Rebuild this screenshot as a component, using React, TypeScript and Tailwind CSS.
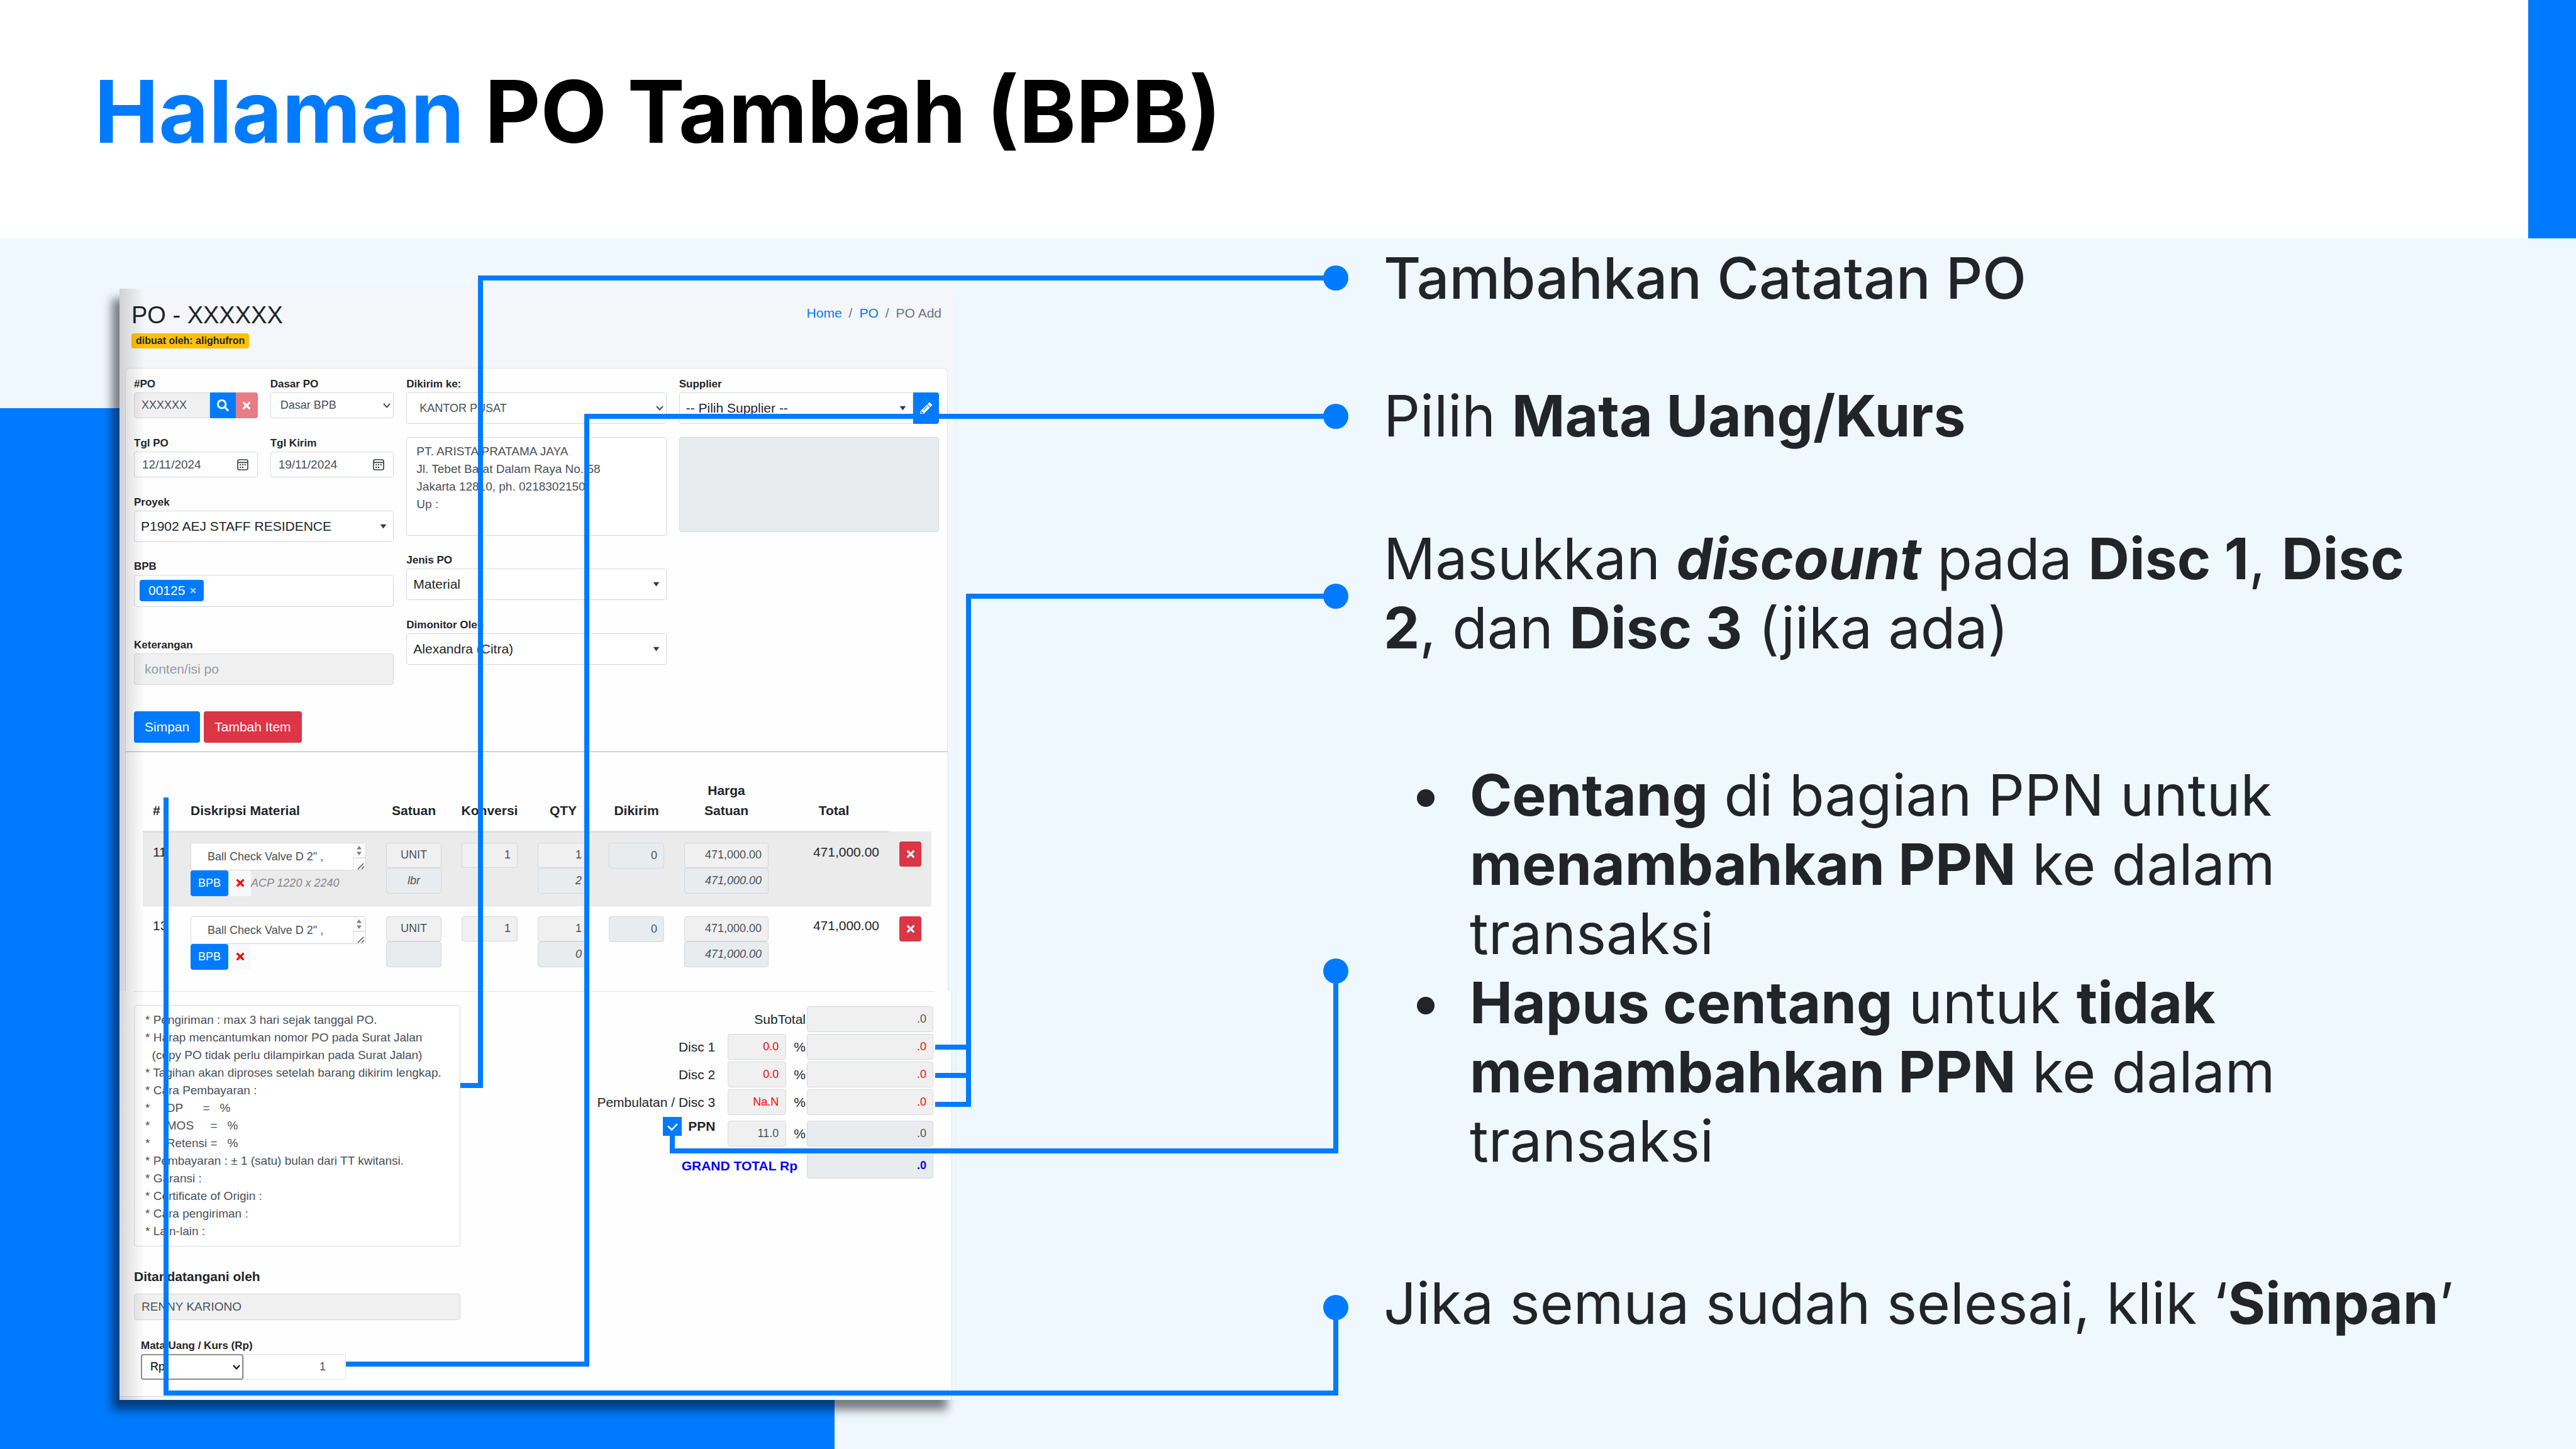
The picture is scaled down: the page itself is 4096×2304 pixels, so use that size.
import React from "react";
import { FaPencilAlt, FaSearch, FaTimes } from "react-icons/fa";

const CONTROL =
  "block w-full min-w-0 rounded-[4px] border border-[#d5dade] text-[#495057] outline-none";

function Caret() {
  return (
    <svg viewBox="0 0 10 7" className="pointer-events-none absolute right-[11px] top-1/2 h-[7px] w-[11px] -translate-y-1/2" aria-hidden="true">
      <path d="M0 0H10L5 7Z" fill="#343a40" />
    </svg>
  );
}

function Chevron({ dark = false }: { dark?: boolean }) {
  return (
    <svg viewBox="0 0 12 8" className="pointer-events-none absolute right-[5px] top-1/2 h-[8px] w-[12px] -translate-y-1/2" aria-hidden="true">
      <path d="M1 1L6 6.5L11 1" fill="none" stroke={dark ? "#000" : "#495057"} strokeWidth="2" />
    </svg>
  );
}

function CalendarIcon() {
  return (
    <svg viewBox="0 0 18 18" className="pointer-events-none absolute right-[15px] top-1/2 size-[18px] -translate-y-1/2" aria-hidden="true">
      <rect x="1" y="1" width="16" height="16" rx="2.5" fill="none" stroke="#343a40" strokeWidth="1.6" />
      <path d="M1 5.4H17" stroke="#343a40" strokeWidth="1.8" />
      <g fill="#343a40">
        <rect x="4.2" y="8" width="2" height="2" />
        <rect x="8" y="8" width="2" height="2" />
        <rect x="11.8" y="8" width="2" height="2" />
        <rect x="4.2" y="12" width="2" height="2" />
        <rect x="8" y="12" width="2" height="2" />
      </g>
    </svg>
  );
}

function Field({ id, label, children }: { id: string; label: string; children: React.ReactNode }) {
  return (
    <div>
      <label htmlFor={id} className="block text-[17px] font-bold leading-[27px]">
        {label}
      </label>
      {children}
    </div>
  );
}

function Dropdown({ id, value, plain = false }: { id: string; value: string; plain?: boolean }) {
  return (
    <div className="relative min-w-0 flex-1">
      <select
        id={id}
        className={
          plain
            ? "block h-[50px] w-full appearance-none rounded-[4px] border border-[#d5dade] bg-white pl-[20px] text-[18px] text-[#495057]"
            : "block h-[50px] w-full appearance-none rounded-[4px] border border-[#d5dade] bg-white pl-[10px] text-[21px] text-[#212529]"
        }
      >
        <option>{value}</option>
      </select>
      {plain ? <Chevron /> : <Caret />}
    </div>
  );
}

function DateField({ id, label, value }: { id: string; label: string; value: string }) {
  return (
    <Field id={id} label={label}>
      <div className="relative">
        <input id={id} defaultValue={value} className={`${CONTROL} h-[41px] bg-white pl-[12px] text-[19px]`} />
        <CalendarIcon />
      </div>
    </Field>
  );
}

function OrderForm() {
  return (
    <section className="bg-[#f4f6f9] pr-[11px] pl-[9px]">
      <header className="flex h-[126px] items-start justify-between pt-[19px] pr-[10px] pl-[10px]">
        <div>
          <h2 className="text-[38px] leading-[46px]">PO - XXXXXX</h2>
          <span className="mt-[6px] block w-fit rounded-[4px] bg-[#ffc107] px-[7px] text-[16px] font-bold leading-[24px]">
            dibuat oleh: alighufron
          </span>
        </div>
        <nav className="mt-[8px] flex gap-[11px] text-[21px] leading-[24px] text-[#6c757d]">
          <a href="#home" className="text-[#007bff]">Home</a>
          <span>/</span>
          <a href="#po" className="text-[#007bff]">PO</a>
          <span>/</span>
          <span>PO Add</span>
        </nav>
      </header>

      <div className="grid h-[610px] grid-cols-3 gap-[20px] rounded-t-[6px] border border-[#e1e4e8] bg-[#fefefe] px-[13px] pt-[11px]">
        <div className="flex flex-col">
          <div className="grid grid-cols-2 gap-x-[20px] gap-y-[26px]">
            <Field id="po" label="#PO">
              <div className="flex">
                <input id="po" defaultValue="XXXXXX" className="h-[41px] w-0 flex-1 rounded-l-[4px] border border-[#d5dade] bg-[#f0f0f0] pl-[11px] text-[18px] text-[#495057]" />
                <button aria-label="Cari PO" className="flex h-[41px] w-[41px] items-center justify-center bg-[#007bff] text-white">
                  <FaSearch className="size-[19px]" />
                </button>
                <button aria-label="Hapus PO" className="flex h-[41px] w-[35px] items-center justify-center rounded-r-[4px] bg-[#e77c87] text-white">
                  <FaTimes className="size-[18px]" />
                </button>
              </div>
            </Field>
            <Field id="dasar" label="Dasar PO">
              <div className="relative">
                <select id="dasar" className="block h-[41px] w-full appearance-none rounded-[4px] border border-[#d5dade] bg-white pl-[15px] text-[18px] text-[#495057]">
                  <option>Dasar BPB</option>
                </select>
                <Chevron />
              </div>
            </Field>
            <DateField id="tgl-po" label="Tgl PO" value="12/11/2024" />
            <DateField id="tgl-kirim" label="Tgl Kirim" value="19/11/2024" />
          </div>
          <div className="mt-[26px]">
            <Field id="proyek" label="Proyek">
              <Dropdown id="proyek" value="P1902 AEJ STAFF RESIDENCE" />
            </Field>
          </div>
          <div className="mt-[25px]">
            <Field id="bpb" label="BPB">
              <div className="flex h-[51px] items-start rounded-[4px] border border-[#d5dade] bg-white px-[8px] pt-[7px]">
                <button id="bpb" className="flex h-[34px] items-center gap-[7px] rounded-[4px] bg-[#007bff] pr-[11px] pl-[14px] text-[21px] text-white">
                  00125 <FaTimes className="size-[12px] text-[#b2d7ff]" />
                </button>
              </div>
            </Field>
          </div>
          <div className="mt-[47px]">
            <Field id="keterangan" label="Keterangan">
              <input id="keterangan" placeholder="konten/isi po" className={`${CONTROL} h-[50px] bg-[#f0f0f0] pl-[16px] text-[21px] placeholder:text-[#939ba2]`} />
            </Field>
          </div>
          <div className="mt-[42px] flex gap-[6px] text-[21px] text-white">
            <button className="h-[50px] rounded-[4px] bg-[#007bff] px-[17px]">Simpan</button>
            <button className="h-[50px] rounded-[4px] bg-[#dc3545] px-[17px]">Tambah Item</button>
          </div>
        </div>

        <div className="flex flex-col">
          <Field id="dikirim" label="Dikirim ke:">
            <Dropdown id="dikirim" value="KANTOR PUSAT" plain />
          </Field>
          <textarea
            aria-label="Alamat pengiriman"
            className={`${CONTROL} mt-[21px] h-[157px] resize-none overflow-hidden bg-white px-[15px] pt-[8px] text-[19px] leading-[28px]`}
            defaultValue={"PT. ARISTA PRATAMA JAYA\nJl. Tebet Barat Dalam Raya No. 58\nJakarta 12810, ph. 0218302150\nUp :"}
          />
          <div className="mt-[25px]">
            <Field id="jenis" label="Jenis PO">
              <Dropdown id="jenis" value="Material" />
            </Field>
          </div>
          <div className="mt-[26px]">
            <Field id="dimonitor" label="Dimonitor Oleh">
              <Dropdown id="dimonitor" value="Alexandra (Citra)" />
            </Field>
          </div>
        </div>

        <div className="flex flex-col">
          <Field id="supplier" label="Supplier">
            <div className="flex">
              <Dropdown id="supplier" value="-- Pilih Supplier --" />
              <button aria-label="Ubah supplier" className="flex h-[50px] w-[41px] items-center justify-center rounded-r-[4px] bg-[#007bff] text-white">
                <FaPencilAlt className="size-[19px]" />
              </button>
            </div>
          </Field>
          <textarea aria-label="Alamat supplier" readOnly className={`${CONTROL} mt-[21px] h-[151px] resize-none bg-[#e9ecef]`} />
        </div>
      </div>
    </section>
  );
}

const CELL = "px-[16px] pt-[16px] align-top";
const EDIT = "block h-[40px] w-full min-w-0 rounded-[4px] border border-[#d3d8dd] bg-[#f0f0f0] px-[10px] text-[18px] text-[#495057]";
const READ = "block h-[41px] w-full min-w-0 rounded-[4px] border border-[#d3d8dd] bg-[#e9ecef] px-[10px] text-[18px] text-[#495057]";

type Item = { no: string; note: string; unit2: string; qty2: string; striped: boolean };

const ITEMS: Item[] = [
  { no: "11", note: "ACP 1220 x 2240", unit2: "lbr", qty2: "2", striped: true },
  { no: "13", note: "", unit2: "", qty2: "0", striped: false },
];

function ItemRow({ item }: { item: Item }) {
  return (
    <tr className={item.striped ? "h-[118px] border-b border-[#dee2e6] bg-[#ebebeb]" : "h-[117px]"}>
      <td className={`${CELL} text-[21px] leading-[30px]`}>{item.no}</td>
      <td className={CELL}>
        <div className="relative">
          <textarea
            aria-label={`Diskripsi material ${item.no}`}
            className="block h-[44px] w-full resize-none overflow-hidden rounded-[4px] border border-[#d3d8dd] bg-white pt-[7px] pl-[21px] text-[18px] leading-[28px] text-[#495057]"
            defaultValue={' Ball Check Valve D 2" ,'}
          />
          <svg viewBox="0 0 20 42" className="pointer-events-none absolute top-px right-px h-[42px] w-[20px]" aria-hidden="true">
            <rect width="20" height="42" fill="#fafafa" />
            <path d="M6 9.5L10 4L14 9.5Z M6 13.500L10 19L14 13.500Z" fill="#808080" />
            <path d="M0 42V23H20" fill="none" stroke="#dcdcdc" strokeWidth="1.500" />
            <path d="M8 41L17 32M14 41L18 37" stroke="#555" strokeWidth="1.500" />
          </svg>
        </div>
        <div className="flex items-center">
          <button className="h-[41px] w-[60px] rounded-[4px] bg-[#007bff] text-[18px] text-white">BPB</button>
          <button aria-label="Lepas BPB" className="ml-px flex h-[41px] w-[35px] items-center justify-center rounded-[3px] bg-[#f8f9fa] text-[#ff0000]">
            <FaTimes className="size-[18px]" />
          </button>
          <i className="text-[18px] whitespace-nowrap text-[#868686]">{item.note}</i>
        </div>
      </td>
      <td className={CELL}>
        <input aria-label="Satuan" defaultValue="UNIT" className={`${EDIT} text-center`} />
        <input aria-label="Satuan konversi" readOnly value={item.unit2} className={`${READ} text-center italic`} />
      </td>
      <td className={CELL}>
        <input aria-label="Konversi" defaultValue="1" className={`${EDIT} text-right`} />
      </td>
      <td className={CELL}>
        <input aria-label="QTY" defaultValue="1" className={`${EDIT} text-right`} />
        <input aria-label="QTY konversi" readOnly value={item.qty2} className={`${READ} text-right italic`} />
      </td>
      <td className={CELL}>
        <input aria-label="Dikirim" readOnly value="0" className={`${READ} text-right`} />
      </td>
      <td className={CELL}>
        <input aria-label="Harga satuan" defaultValue="471,000.00" className={`${EDIT} text-right`} />
        <input aria-label="Harga konversi" readOnly value="471,000.00" className={`${READ} text-right italic`} />
      </td>
      <td className={`${CELL} text-right text-[21px] leading-[30px]`}>471,000.00</td>
      <td className={CELL}>
        <button aria-label="Hapus item" className="flex h-[40px] w-full items-center justify-center rounded-[4px] bg-[#dc3545] text-white">
          <FaTimes className="size-[18px]" />
        </button>
      </td>
    </tr>
  );
}

function ItemTable() {
  const head = "border-b-[3px] border-[#dee2e6] pb-[16px] align-bottom leading-[32px]";
  return (
    <section className="mr-[10px] h-[381px] border-r border-[#dcdfe3] bg-[#f4f6f9] pl-[9px]">
      <div className="h-full border-t border-t-[#b9c6de] border-l border-l-[#dcdfe3] bg-[#fefefe] pr-[26px] pl-[27px]">
        <table className="w-full table-fixed border-collapse">
          <colgroup>
            <col className="w-[60px]" />
            <col />
            <col className="w-[120px]" />
            <col className="w-[121px]" />
            <col className="w-[113px]" />
            <col className="w-[120px]" />
            <col className="w-[166px]" />
            <col className="w-[176px]" />
            <col className="w-[67px]" />
          </colgroup>
          <thead>
            <tr className="h-[126px] text-[21px]">
              <th className={`${head} px-[16px] text-left`}>#</th>
              <th className={`${head} px-[16px] text-left`}>Diskripsi Material</th>
              <th className={head}>Satuan</th>
              <th className={head}>Konversi</th>
              <th className={head}>QTY</th>
              <th className={head}>Dikirim</th>
              <th className={`${head} px-[30px]`}>Harga Satuan</th>
              <th className={head}>Total</th>
              <td />
            </tr>
          </thead>
          <tbody>
            {ITEMS.map((item) => (
              <ItemRow key={item.no} item={item} />
            ))}
          </tbody>
        </table>
      </div>
    </section>
  );
}

const NOTES = [
  "* Pengiriman : max 3 hari sejak tanggal PO.",
  "* Harap mencantumkan nomor PO pada Surat Jalan",
  "  (copy PO tidak perlu dilampirkan pada Surat Jalan)",
  "* Tagihan akan diproses setelah barang dikirim lengkap.",
  "* Cara Pembayaran :",
  "*     DP      =   %",
  "*     MOS     =   %",
  "*     Retensi =   %",
  "* Pembayaran : ± 1 (satu) bulan dari TT kwitansi.",
  "* Garansi :",
  "* Certificate of Origin :",
  "* Cara pengiriman :",
  "* Lain-lain :",
].join("\n");

const DISCOUNTS = [
  { id: "disc1", label: "Disc 1", pct: "0.0" },
  { id: "disc2", label: "Disc 2", pct: "0.0" },
  { id: "disc3", label: "Pembulatan / Disc 3", pct: "Na.N" },
];

const TOTAL = "h-[41px] w-[201px] rounded-[4px] border border-[#d5dade] px-[10px] text-right text-[18px]";
const PERCENT = "h-[41px] w-[93px] rounded-[4px] border border-[#d5dade] bg-[#f0f0f0] px-[11px] text-right text-[18px]";

function Totals() {
  return (
    <div className="flex flex-col gap-[3px] pt-[23px] pr-[2px] text-[21px]">
      <div className="flex items-center justify-end gap-[2px]">
        <label htmlFor="subtotal">SubTotal</label>
        <input id="subtotal" defaultValue=".0" className={`${TOTAL} bg-[#f0f0f0] text-[#495057]`} />
      </div>
      {DISCOUNTS.map((d) => (
        <div key={d.id} className="flex items-center justify-end">
          <label htmlFor={d.id} className="mr-[20px]">{d.label}</label>
          <input id={d.id} defaultValue={d.pct} className={`${PERCENT} text-[#ff0000]`} />
          <span className="mr-[2px] ml-[12px]">%</span>
          <input aria-label={`Nilai ${d.label}`} defaultValue=".0" className={`${TOTAL} bg-[#f0f0f0] text-[#ff0000]`} />
        </div>
      ))}
      <div className="flex items-end justify-end">
        <label className="mr-[20px] flex h-[47px] items-start gap-[10px] font-bold leading-[30px]">
          <span className="relative size-[30px]">
            <input type="checkbox" defaultChecked className="block size-[30px] appearance-none bg-[#007bff]" />
            <svg viewBox="0 0 30 30" className="pointer-events-none absolute inset-0" aria-hidden="true">
              <path d="M8 14.500L14 20.500L23 11" fill="none" stroke="#fff" strokeWidth="2.500" />
            </svg>
          </span>
          PPN
        </label>
        <input aria-label="PPN persen" defaultValue="11.0" className={`${PERCENT} text-[#495057]`} />
        <span className="mr-[2px] ml-[12px] leading-[41px]">%</span>
        <input aria-label="Nilai PPN" readOnly value=".0" className={`${TOTAL} bg-[#e9ecef] text-[#495057]`} />
      </div>
      <div className="mt-[7px] flex items-center justify-end font-bold text-[#0000ff]">
        <label htmlFor="grand" className="mr-[15px]">GRAND TOTAL Rp</label>
        <input id="grand" readOnly value=".0" className={`${TOTAL} bg-[#e9ecef]`} />
      </div>
    </div>
  );
}

function Summary() {
  return (
    <section className="mr-[4px] flex h-[650px] flex-col border-r border-[#dcdfe3] bg-[#fefefe]">
      <div className="mr-[27px] ml-[23px] flex flex-1 justify-between border-t border-[#e0e3e6]">
        <div className="w-[519px] pt-[21px]">
          <textarea
            aria-label="Catatan PO"
            defaultValue={NOTES}
            className={`${CONTROL} h-[384px] resize-none overflow-hidden bg-white pt-[9px] pl-[17px] text-[19px] leading-[28px] whitespace-pre`}
          />
          <label htmlFor="signer" className="mt-[32px] block text-[21px] font-bold leading-[32px]">Ditandatangani oleh</label>
          <input id="signer" defaultValue="RENNY KARIONO" className={`${CONTROL} mt-[11px] h-[42px] bg-[#f0f0f0] pl-[11px] text-[19px]`} />
          <div className="mt-[27px] ml-[11px]">
            <Field id="currency" label="Mata Uang / Kurs (Rp)">
              <div className="flex">
                <div className="relative w-[163px]">
                  <select id="currency" className="block h-[41px] w-full appearance-none rounded-[4px] border-2 border-[#8f8f8f] bg-white pl-[13px] text-[18px] text-black">
                    <option>Rp</option>
                  </select>
                  <Chevron dark />
                </div>
                <input aria-label="Kurs" defaultValue="1" className="h-[41px] w-[163px] rounded-[4px] border border-[#dde1e5] bg-white pr-[31px] text-right text-[18px] text-[#495057]" />
              </div>
            </Field>
          </div>
        </div>
        <Totals />
      </div>
      <div className="h-[6px] border-t border-[#d5d8dc] bg-[#f4f6f9]" />
    </section>
  );
}

function Connectors() {
  return (
    <svg viewBox="0 0 4096 2304" preserveAspectRatio="none" className="pointer-events-none absolute inset-0 h-full w-full" aria-hidden="true">
      <g fill="none" stroke="#007bff" strokeWidth="8">
        <path d="M2124 442H764V1726H732" />
        <path d="M2124 662H933V2169H550" />
        <path d="M2124 948H1540V1756H1487M1540 1665H1487M1540 1710H1487" />
        <path d="M2124 1544V1830H1069V1805" />
        <path d="M2124 2079V2215H264V1268" />
      </g>
      <g fill="#007bff">
        <circle cx="2124" cy="442" r="20" />
        <circle cx="2124" cy="662" r="20" />
        <circle cx="2124" cy="948" r="20" />
        <circle cx="2124" cy="1544" r="20" />
        <circle cx="2124" cy="2079" r="20" />
      </g>
    </svg>
  );
}

function Bullet({ children }: { children: React.ReactNode }) {
  return (
    <li className="flex">
      <span className="mt-[46px] mr-[56px] ml-[53px] size-[28px] shrink-0 rounded-full bg-[#212529]" />
      <p>{children}</p>
    </li>
  );
}

export default function App() {
  return (
    <div className="relative flex min-h-screen w-full flex-col overflow-hidden bg-[#f0f8ff] font-['Inter',sans-serif]">
      <header className="flex h-[379px] shrink-0 items-start justify-between bg-white">
        <h1 className="pt-[94px] pl-[150px] text-[137px] font-bold leading-[167px] text-black">
          <span className="text-[#007bff]">Halaman</span> PO Tambah (BPB)
        </h1>
        <div className="h-full w-[76px] bg-[#007bff]" />
      </header>
      <div className="absolute top-[649px] bottom-0 left-0 w-[32.4%] bg-[#007bff]" />

      <main className="relative grid grid-cols-[minmax(0,1328fr)_minmax(0,1712fr)] gap-[682px] pr-[184px] pl-[190px]">
        <div className="relative mt-[80px] h-fit font-['Liberation_Sans',Arial,sans-serif] text-[#212529] shadow-[-12px_16px_14px_rgba(0,0,0,0.5)]">
          <OrderForm />
          <ItemTable />
          <Summary />
          <div className="pointer-events-none absolute inset-y-0 left-0 w-[40px] bg-linear-to-r from-black/15 to-transparent" />
        </div>

        <div className="pt-[8px] text-[91px] leading-[110px] text-[#212529]">
          <p className="font-medium">Tambahkan Catatan PO</p>
          <p className="mt-[109px]">
            Pilih <b>Mata Uang/Kurs</b>
          </p>
          <p className="mt-[117px]">
            Masukkan <b><i>discount</i></b> pada <b>Disc 1</b>, <b>Disc 2</b>, dan <b>Disc 3</b> (jika ada)
          </p>
          <ul className="mt-[156px]">
            <Bullet>
              <b>Centang</b> di bagian PPN untuk <b>menambahkan PPN</b> ke dalam transaksi
            </Bullet>
            <Bullet>
              <b>Hapus centang</b> untuk <b>tidak menambahkan PPN</b> ke dalam transaksi
            </Bullet>
          </ul>
          <p className="mt-[148px] whitespace-nowrap">
            Jika semua sudah selesai, klik ‘<b>Simpan</b>’
          </p>
        </div>
      </main>
      <Connectors />
    </div>
  );
}
